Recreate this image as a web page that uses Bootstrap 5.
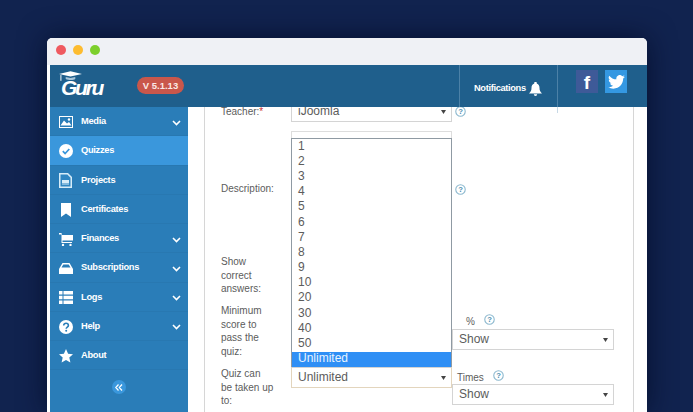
<!DOCTYPE html>
<html lang="en">
<head>
<meta charset="utf-8">
<title>Guru</title>
<link rel="stylesheet" href="https://cdn.jsdelivr.net/npm/bootstrap@5.3.0/dist/css/bootstrap.min.css">
<style>
html,body{height:412px;overflow:hidden}
body{background:#11234f;font-family:"Liberation Sans",Arial,sans-serif;font-size:10px;color:#5c5c5c}
.stage{padding:38px 46px 0 47px;height:412px;overflow:hidden}
.win{height:374px;background:#fff;border-radius:5px 5px 0 0;box-shadow:0 0 28px rgba(3,10,35,.75);overflow:hidden}
.titlebar{height:27px;background:#eff1f5;padding:0 0 3px 9px;gap:7px;border-radius:5px 5px 0 0}
.dot{width:10px;height:10px;border-radius:50%}
.dot-r{background:#ef5a60}.dot-y{background:#fdbc30}.dot-g{background:#7ccf2c}
.inner{margin-left:3px;height:347px;position:relative}
.topbar{height:42px;background:#1f5f8c;color:#fff;position:relative;z-index:3}
.brand{width:87px;padding-left:9px}
.guru{display:block;padding-left:2px;font-style:italic;font-weight:700;font-size:21px;line-height:22px;letter-spacing:-2.3px;color:#fff;font-family:"Liberation Sans",sans-serif}
.logo-wrap{position:relative;height:32px;padding-top:7px}
.cap{position:absolute;left:0;top:1px}
.ver{width:47px;height:17px;border-radius:9px;background:#c9574b;color:#fbe9e6;font-weight:700;font-size:9.5px;line-height:17px;text-align:center;margin-top:-1px}
.notif{position:absolute;left:409px;top:0;width:98px;height:42px;border-left:1px solid rgba(130,170,200,.45);padding:5px 0 0 14px;font-weight:700;font-size:9.3px;letter-spacing:-.35px;gap:3px}
.social{position:absolute;left:507px;top:0;width:90px;height:48px;border-left:1px solid rgba(130,170,200,.45);padding:5px 0 0 18px;gap:7px}
.soc{width:22px;height:23px}
.soc-f{background:#3e5a98;color:#fff;font-weight:700;font-size:19px;line-height:25px;text-align:center;font-family:"Liberation Sans",sans-serif}
.soc-t{background:#3498e2}
.bodyrow{height:305px}
.side{width:138px;background:#2a7db8;flex:none;height:305px}
.side-item{height:29.25px;padding:2px 7px 0 9px;color:#fff;font-weight:700;font-size:9.3px;letter-spacing:-.3px;border-bottom:1px solid #2878b1}
.side-item.on{background:#3a97dc}
.side-ic{width:22px;flex:none;line-height:0}
.side-txt{flex:1}
.chev{margin-top:1px}
.collapse-dot{width:14px;height:14px;border-radius:50%;background:#3a97dc;margin:10px auto 0;line-height:0}
.panel-wrap{flex:1;padding:0 13px 0 16px;min-width:0}
.panel{border-left:1px solid #d6d6d6;border-right:1px solid #d6d6d6;height:305px;padding-left:16px;overflow:hidden}
.frow{display:flex}
.lab{width:70px;flex:none;line-height:13.5px;font-size:10px;color:#5c5c5c}
.ctl{width:161px;flex:none;position:relative}
.sel{display:block;width:162px;font-family:"Liberation Sans",sans-serif;font-size:12px;color:#5c5c5c;height:21px;line-height:19px;padding:0 0 0 6px;border:1px solid #d4d4d4;border-radius:0;background-image:url("data:image/svg+xml,%3Csvg xmlns='http://www.w3.org/2000/svg' width='6' height='5'%3E%3Cpath d='M0 0h6L3 5z' fill='%23444'/%3E%3C/svg%3E");background-size:5px 4px;background-position:right 5px center;box-shadow:none}
.ctl .sel{width:161px}
.sel-open{border-color:#e3d5bd;border-top-color:#d4d4d4}
.ta{display:block;width:161px;height:114px;border:1px solid #ddd;border-radius:0;resize:none;padding:0}
.help{width:11px;height:11px;line-height:0;flex:none}
.help-gap{margin-left:3px}
.r-teacher{margin-top:-6px;height:21px}
.r-teacher .lab{padding-top:1px}
.r-desc{margin-top:9px;height:114px}
.r-desc .lab,.r-desc .help{margin-top:2px}
.r-show{margin-top:10px;height:40px}
.r-min{margin-top:9px;height:54px}
.r-quiz{margin-top:9px}
.req{color:#c9302c}
.sidecol{width:162px}
.sidecap{font-size:10px;line-height:12px;gap:9px;color:#5c5c5c}
.sidecap .help{margin-top:-2px}
.cap-pct{height:25px;padding:12px 0 0 14px}
.cap-times{height:17px;padding:5px 0 0 5px}
.listb{position:absolute;left:0;top:-229px;width:161px;height:229px;z-index:2;background:#fff;border:1px solid #8f9aa3;border-bottom:0;margin:0;padding:0;list-style:none;font-size:12px;color:#5c5c5c}
.listb li{height:15.2px;line-height:12px;padding:0 0 0 6px;display:flex;align-items:center}
.listb li:first-child{height:14.2px}
.listb li.act{background:#2f8ff5;color:#e8f3ff;height:15px;margin-top:1px;padding-bottom:2px}
</style>
</head>
<body>
<div class="stage">
<div class="win">
  <div class="titlebar d-flex align-items-center">
    <span class="dot dot-r"></span><span class="dot dot-y"></span><span class="dot dot-g"></span>
  </div>
  <div class="inner">
    <div class="topbar d-flex align-items-center">
      <div class="brand">
        <div class="logo-wrap">
          <svg class="cap" width="23" height="11" viewBox="0 0 24 11"><path d="M0 3 12 0l12 3-12 2.500z" fill="#fff"/><path d="M7 6v2c3 1.500 8 1.500 10 0V6l-5 1z" fill="#a9c6da"/><path d="M2 4v6" stroke="#fff" stroke-width="1"/></svg>
          <span class="guru">Guru</span>
        </div>
      </div>
      <div class="ver">V 5.1.13</div>
      <div class="notif d-flex align-items-center">
        <span>Notifications</span>
        <svg width="13" height="14" viewBox="0 0 13 14"><path d="M6.500 0a1.200 1.200 0 0 1 1.200 1.600C9.800 2.200 10.500 4 10.500 6c0 2.600.8 3.800 2.500 5.500H0C1.700 9.800 2.500 8.600 2.500 6c0-2 .7-3.800 2.800-4.400A1.200 1.200 0 0 1 6.500 0zM4.800 12.300h3.400a1.700 1.700 0 0 1-3.400 0z" fill="#fff"/></svg>
      </div>
      <div class="social d-flex align-items-start">
        <span class="soc soc-f">f</span>
        <span class="soc soc-t d-flex align-items-center justify-content-center">
          <svg width="17" height="14" viewBox="0 0 24 20"><path d="M24 2.400c-.9.400-1.800.7-2.800.8 1-.6 1.800-1.600 2.200-2.700-1 .6-2 1-3.100 1.200A4.900 4.900 0 0 0 11.900 6.200 14 14 0 0 1 1.700.9a4.900 4.900 0 0 0 1.500 6.600c-.8 0-1.600-.2-2.200-.6 0 2.400 1.700 4.400 3.900 4.900-.7.200-1.500.2-2.200.1.600 2 2.400 3.400 4.600 3.400A9.900 9.900 0 0 1 0 17.300 14 14 0 0 0 7.500 19.500c9.100 0 14.300-7.700 14-14.600 1-.7 1.800-1.500 2.500-2.500z" fill="#fff"/></svg>
        </span>
      </div>
    </div>
    <div class="bodyrow d-flex">
      <nav class="side">
        <div class="side-item d-flex align-items-center">
          <span class="side-ic"><svg width="14" height="12" viewBox="0 0 14 12"><path d="M0 0h14v12H0z" fill="#fff"/><path d="M1 1h12v10H1z" fill="#2a7db8"/><path d="M1.500 9.500 5 4.500l3 3 2-1.500 2.500 3.500z" fill="#fff"/><circle cx="10" cy="3.500" r="1.200" fill="#fff"/></svg></span>
          <span class="side-txt">Media</span>
          <svg class="chev" width="9" height="6" viewBox="0 0 9 6"><path d="M1 1l3.500 3.500L8 1" fill="none" stroke="#fff" stroke-width="1.600"/></svg>
        </div>
        <div class="side-item on d-flex align-items-center">
          <span class="side-ic"><svg width="14" height="14" viewBox="0 0 14 14"><circle cx="7" cy="7" r="7" fill="#fff"/><path d="M3.800 7.200l2.300 2.400 4.200-4.600" fill="none" stroke="#3a97dc" stroke-width="1.700"/></svg></span>
          <span class="side-txt">Quizzes</span>
        </div>
        <div class="side-item d-flex align-items-center">
          <span class="side-ic"><svg width="13" height="15" viewBox="0 0 13 15"><path d="M0 0h9l4 4v11H0z" fill="#d6ecf8"/><path d="M1.500 1.500h6.800l3.200 3.200v8.800h-10z" fill="#2f86c2"/><path d="M3 7h7v3H3z" fill="#d6ecf8"/><path d="M3 11h7" stroke="#d6ecf8"/></svg></span>
          <span class="side-txt">Projects</span>
        </div>
        <div class="side-item d-flex align-items-center">
          <span class="side-ic"><svg width="13" height="14" viewBox="0 0 13 14"><path d="M2 0h10v14l-5-3.500L2 14z" fill="#fff"/></svg></span>
          <span class="side-txt">Certificates</span>
        </div>
        <div class="side-item d-flex align-items-center">
          <span class="side-ic"><svg width="14" height="13" viewBox="0 0 14 13"><path d="M0 0h2.500l.5 2h11v5.500H3.500v1.500H13v1H2.500V1.500H0z" fill="#fff"/><circle cx="4" cy="12" r="1.200" fill="#fff"/><circle cx="11.500" cy="12" r="1.200" fill="#fff"/></svg></span>
          <span class="side-txt">Finances</span>
          <svg class="chev" width="9" height="6" viewBox="0 0 9 6"><path d="M1 1l3.500 3.500L8 1" fill="none" stroke="#fff" stroke-width="1.600"/></svg>
        </div>
        <div class="side-item d-flex align-items-center">
          <span class="side-ic"><svg width="14" height="11" viewBox="0 0 14 11"><path d="M3.500 0h7L14 6v5H0V6z" fill="#fff"/><path d="M4.300 1.500h5.400L11.500 4.500h-9z" fill="#2a7db8"/></svg></span>
          <span class="side-txt">Subscriptions</span>
          <svg class="chev" width="9" height="6" viewBox="0 0 9 6"><path d="M1 1l3.500 3.500L8 1" fill="none" stroke="#fff" stroke-width="1.600"/></svg>
        </div>
        <div class="side-item d-flex align-items-center">
          <span class="side-ic"><svg width="14" height="13" viewBox="0 0 14 13"><path d="M0 0h3.500v3.500H0zM4.500 0H14v3.500H4.500zM0 4.700h3.500v3.600H0zM4.500 4.700H14v3.600H4.500zM0 9.500h3.500V13H0zM4.500 9.500H14V13H4.500z" fill="#fff"/></svg></span>
          <span class="side-txt">Logs</span>
          <svg class="chev" width="9" height="6" viewBox="0 0 9 6"><path d="M1 1l3.500 3.500L8 1" fill="none" stroke="#fff" stroke-width="1.600"/></svg>
        </div>
        <div class="side-item d-flex align-items-center">
          <span class="side-ic"><svg width="14" height="14" viewBox="0 0 14 14"><circle cx="7" cy="7" r="7" fill="#fff"/><path d="M4.700 5.500C4.700 4.200 5.700 3.300 7 3.300s2.400.9 2.400 2.100c0 1.700-2.200 1.700-2.200 3.400" fill="none" stroke="#2a7db8" stroke-width="1.600"/><circle cx="7.200" cy="10.700" r="1" fill="#2a7db8"/></svg></span>
          <span class="side-txt">Help</span>
          <svg class="chev" width="9" height="6" viewBox="0 0 9 6"><path d="M1 1l3.500 3.500L8 1" fill="none" stroke="#fff" stroke-width="1.600"/></svg>
        </div>
        <div class="side-item d-flex align-items-center">
          <span class="side-ic"><svg width="14" height="14" viewBox="0 0 14 14"><path d="M7 0l2.100 4.700 4.900.5-3.700 3.300 1.100 5L7 11l-4.400 2.500 1.100-5L0 5.200l4.900-.5z" fill="#fff"/></svg></span>
          <span class="side-txt">About</span>
        </div>
        <div class="collapse-dot d-flex align-items-center justify-content-center">
          <svg width="8" height="7" viewBox="0 0 8 7"><path d="M3.500.5.800 3.500l2.700 3M7 .5 4.300 3.500 7 6.500" fill="none" stroke="#fff" stroke-width="1.200"/></svg>
        </div>
      </nav>
      <main class="panel-wrap">
        <div class="panel">
          <div class="frow r-teacher align-items-center">
            <div class="lab">Teacher:<span class="req">*</span></div>
            <div class="ctl"><select class="form-select sel"><option>iJoomla</option></select></div>
            <span class="help help-gap"><svg width="11" height="11" viewBox="0 0 10 10"><circle cx="5" cy="5" r="4.300" fill="none" stroke="#8db9cf"/><text x="5" y="7.500" font-size="7" font-family="Liberation Sans" text-anchor="middle" fill="#4d8fb0" font-weight="700">?</text></svg></span>
          </div>
          <div class="frow r-desc align-items-center">
            <div class="lab">Description:</div>
            <div class="ctl"><textarea class="ta form-control" aria-label="Description"></textarea></div>
            <span class="help help-gap"><svg width="11" height="11" viewBox="0 0 10 10"><circle cx="5" cy="5" r="4.300" fill="none" stroke="#8db9cf"/><text x="5" y="7.500" font-size="7" font-family="Liberation Sans" text-anchor="middle" fill="#4d8fb0" font-weight="700">?</text></svg></span>
          </div>
          <div class="frow r-show">
            <div class="lab">Show<br>correct<br>answers:</div>
          </div>
          <div class="frow r-min">
            <div class="lab">Minimum<br>score to<br>pass the<br>quiz:</div>
            <div class="ctl"></div>
            <div class="sidecol">
              <div class="sidecap cap-pct d-flex align-items-start"><span>%</span><span class="help"><svg width="11" height="11" viewBox="0 0 10 10"><circle cx="5" cy="5" r="4.300" fill="none" stroke="#8db9cf"/><text x="5" y="7.500" font-size="7" font-family="Liberation Sans" text-anchor="middle" fill="#4d8fb0" font-weight="700">?</text></svg></span></div>
              <select class="form-select sel"><option>Show</option></select>
            </div>
          </div>
          <div class="frow r-quiz">
            <div class="lab">Quiz can<br>be taken up<br>to:</div>
            <div class="ctl">
              <ul class="listb">
                <li>1</li><li>2</li><li>3</li><li>4</li><li>5</li><li>6</li><li>7</li><li>8</li><li>9</li><li>10</li><li>20</li><li>30</li><li>40</li><li>50</li><li class="act">Unlimited</li>
              </ul>
              <select class="form-select sel sel-open"><option>Unlimited</option></select>
            </div>
            <div class="sidecol">
              <div class="sidecap cap-times d-flex align-items-start"><span>Times</span><span class="help"><svg width="11" height="11" viewBox="0 0 10 10"><circle cx="5" cy="5" r="4.300" fill="none" stroke="#8db9cf"/><text x="5" y="7.500" font-size="7" font-family="Liberation Sans" text-anchor="middle" fill="#4d8fb0" font-weight="700">?</text></svg></span></div>
              <select class="form-select sel"><option>Show</option></select>
            </div>
          </div>
        </div>
      </main>
    </div>
  </div>
</div>
</div>
</body>
</html>
